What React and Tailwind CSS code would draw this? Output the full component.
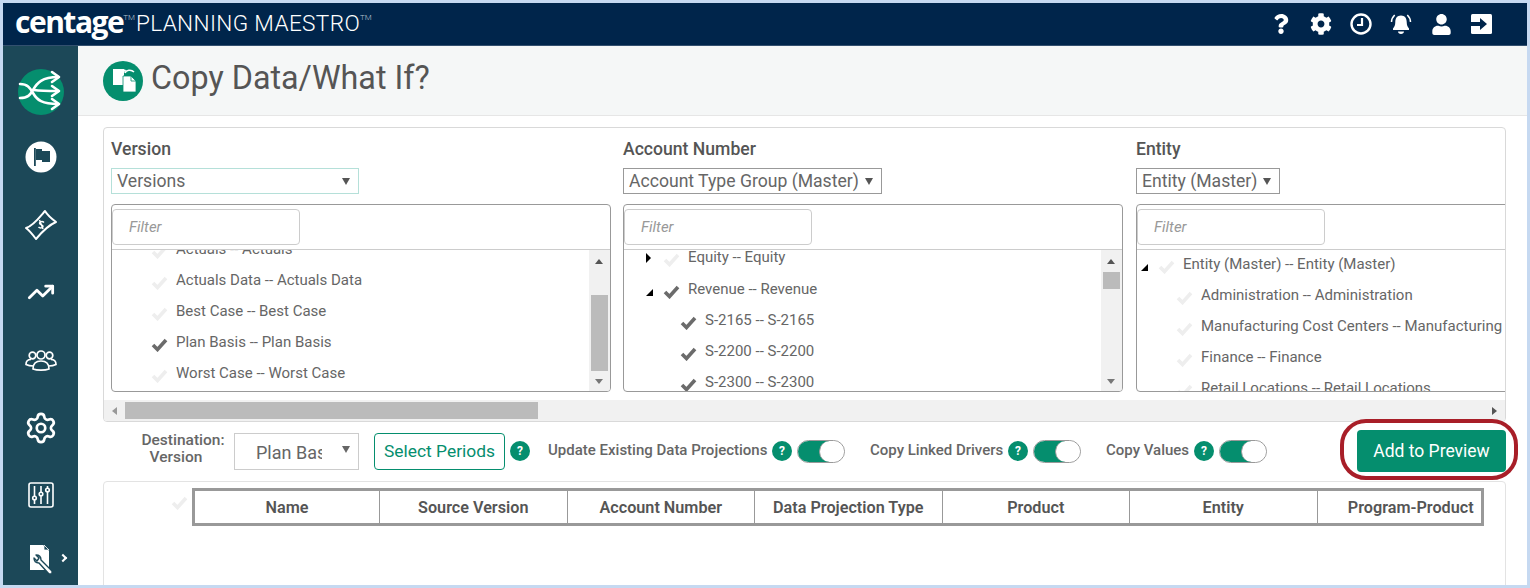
import { FaCog, FaQuestion, FaUser } from 'react-icons/fa'
import { Settings, TrendingUp } from 'lucide-react'

const columns = [
  {
    title: 'Version',
    select: 'Versions',
    widthClass: 'w-[512px]',
    selectClass: 'w-[248px] border-[#b5e0d9]',
    scrollClass: 'h-[76px] mt-[31px]',
    listOffset: '-mt-[16px]',
    rows: [
      { label: 'Actuals -- Actuals', pad: 'pl-[22px]' },
      { label: 'Actuals Data -- Actuals Data', pad: 'pl-[22px]' },
      { label: 'Best Case -- Best Case', pad: 'pl-[22px]' },
      { label: 'Plan Basis -- Plan Basis', pad: 'pl-[22px]', checked: true },
      { label: 'Worst Case -- Worst Case', pad: 'pl-[22px]' },
    ],
  },
  {
    title: 'Account Number',
    select: 'Account Type Group (Master)',
    widthClass: 'w-[513px]',
    selectClass: 'w-[259px] border-[#999999]',
    scrollClass: 'h-[17px] mt-[8px]',
    listOffset: '-mt-[9px]',
    rows: [
      { label: 'Equity -- Equity', pad: 'pl-[22px]', arrow: 'right', tall: true },
      { label: 'Revenue -- Revenue', pad: 'pl-[22px]', arrow: 'down', checked: true },
      { label: 'S-2165 -- S-2165', pad: 'pl-[39px]', checked: true },
      { label: 'S-2200 -- S-2200', pad: 'pl-[39px]', checked: true },
      { label: 'S-2300 -- S-2300', pad: 'pl-[39px]', checked: true },
    ],
  },
  {
    title: 'Entity',
    select: 'Entity (Master)',
    widthClass: 'w-[513px]',
    selectClass: 'w-[144px] border-[#999999]',
    listOffset: '-mt-[1px]',
    rows: [
      { label: 'Entity (Master) -- Entity (Master)', pad: 'pl-[4px]', arrow: 'down' },
      { label: 'Administration -- Administration', pad: 'pl-[22px]' },
      { label: 'Manufacturing Cost Centers -- Manufacturing Cost Centers', pad: 'pl-[22px]' },
      { label: 'Finance -- Finance', pad: 'pl-[22px]' },
      { label: 'Retail Locations -- Retail Locations', pad: 'pl-[22px]' },
    ],
  },
]

const tableHeaders = ['Name', 'Source Version', 'Account Number', 'Data Projection Type', 'Product', 'Entity', 'Program-Product']

function LogoMark() {
  return (
    <svg width="46" height="46" viewBox="0 0 46 46" fill="none">
      <circle cx="23" cy="23" r="23" fill="#058e6e" />
      <g stroke="#fff" strokeWidth="2.6" strokeLinecap="round" strokeLinejoin="round">
        <path d="M2 29c8 0 10-3 13-8 4-7 9-13 25-13" />
        <path d="M2 15c8 0 10 4 13 9 4 7 9 11 25 11" />
        <path d="M16 21c7 1 13 1 24 1" />
        <path d="M34 3l7 5-7 5M34 17l7 5-7 5M34 30l7 5-7 5" />
      </g>
    </svg>
  )
}

function CopyMark() {
  return (
    <svg width="40" height="40" viewBox="0 0 40 40">
      <circle cx="20" cy="20" r="20" fill="#058e6e" />
      <path d="M10 8h11v16H10z" fill="#fff" />
      <path d="M22 12c1-3 6-4 9-1" fill="none" stroke="#fff" strokeWidth="1.6" />
      <path d="M20 8l3 1-1 3z" fill="#fff" />
      <path d="M20 15h8l5 5v11H20z" fill="#fff" stroke="#058e6e" strokeWidth=".8" />
      <path d="M28 15v5h5" fill="none" stroke="#058e6e" strokeWidth=".8" />
    </svg>
  )
}

function ClockIcon() {
  return (
    <svg width="22" height="22" viewBox="0 0 22 22" fill="none" stroke="#fff">
      <circle cx="11" cy="11" r="9.5" strokeWidth="2.4" />
      <path d="M12 5v7H7" strokeWidth="2.2" />
    </svg>
  )
}

function BellIcon() {
  return (
    <svg width="22" height="22" viewBox="0 0 22 22">
      <path d="M11 2.500c3.800 0 5.700 2.800 5.700 6.500 0 3.500 1 5 2.300 6.500v1.500H3v-1.500C4.300 14 5.300 12.500 5.300 9c0-3.700 1.900-6.500 5.700-6.500zM8 18.500h6c0 1.500-1.300 2.500-3 2.500s-3-1-3-2.500z" fill="#fff" />
      <path d="M1.500 9c0-2.800 1.200-5 3.200-7M20.500 9c0-2.800-1.200-5-3.200-7" fill="none" stroke="#fff" strokeWidth="1.500" />
    </svg>
  )
}

function ExitIcon() {
  return (
    <svg width="21" height="20" viewBox="0 0 21 20">
      <rect width="21" height="20" rx="1.500" fill="#fff" />
      <path d="M0 8h9V4l7 6-7 6v-4H0z" fill="#00254b" />
    </svg>
  )
}

function FlagIcon() {
  return (
    <svg width="32" height="32" viewBox="0 0 32 32">
      <circle cx="16" cy="16" r="15.500" fill="#fff" />
      <path d="M9 7h1.800v18H9z" fill="#1c4858" />
      <path d="M11 8h6v2h8v11h-8v-2h-6z" fill="#1c4858" />
    </svg>
  )
}

function MoneyIcon() {
  return (
    <svg width="32" height="32" viewBox="0 0 32 32" fill="none" stroke="#fff" strokeWidth="2" strokeLinejoin="round">
      <path d="M1 19C8 17 14 9 20 2c3 5 7 8 11 11-7 3-15 11-20 17-3-4-6-8-10-11z" />
      <path d="M19 13.500c-1.500-1.500-4-1-4.500.5-.5 2 4 1.500 3.500 3.500-.5 1.500-3 2-4.500.5M14.500 11l3.500 9" strokeWidth="1.500" />
    </svg>
  )
}

function PeopleIcon() {
  return (
    <svg width="32" height="22" viewBox="0 0 32 22" fill="none" stroke="#fff" strokeWidth="1.700">
      <circle cx="16" cy="6" r="4" />
      <circle cx="7.500" cy="6.500" r="3.300" />
      <circle cx="24.500" cy="6.500" r="3.300" />
      <path d="M8 20c0-6 3-8 8-8s8 2 8 8c-4 1.500-12 1.500-16 0z" />
      <path d="M8.500 17C5 17 3 16.500 1 15.500c0-3.500 2-5 5-5M23.500 17c3.500 0 5.500-.5 7.500-1.500 0-3.500-2-5-5-5" />
    </svg>
  )
}

function SlidersIcon() {
  return (
    <svg width="26" height="26" viewBox="0 0 26 26" fill="none" stroke="#fff" strokeWidth="1.600">
      <rect x="1" y="1" width="24" height="24" rx="2" />
      <path d="M6.500 4v10M6.500 18v4M13 4v6M13 14v8M19.500 4v2M19.500 10v12" />
      <circle cx="6.500" cy="16" r="1.800" />
      <circle cx="13" cy="12" r="1.800" />
      <circle cx="19.500" cy="8" r="1.800" />
    </svg>
  )
}

function DocWrenchIcon() {
  return (
    <svg width="24" height="31" viewBox="0 0 24 31">
      <path d="M1 1h13l6 6v19H1z" fill="#fff" />
      <path d="M15 1l5 5h-5z" fill="#1c4858" stroke="#fff" strokeWidth=".8" />
      <path d="M5 14c0 3 2 5 5 5l10 11h3v-3L12 16c0-3-2-5-5-5l3 3-2 3z" fill="#fff" stroke="#1c4858" strokeWidth="1.400" strokeLinejoin="round" />
    </svg>
  )
}

function CheckMark({ checked }) {
  return (
    <svg className="mr-[8px] mt-[4px] shrink-0" width="17" height="15" viewBox="0 0 17 15" fill="none">
      <path d="M2 8l4.500 4.500L15 3" stroke={checked ? '#6b6b6b' : '#eeeeee'} strokeWidth="3.600" />
    </svg>
  )
}

function Caret({ className }) {
  return <span className={`border-x-[4px] border-t-[7px] border-x-transparent ${className}`} />
}

function HelpDot() {
  return (
    <span className="flex h-[20px] w-[20px] shrink-0 items-center justify-center rounded-full bg-[#058e6e] text-[12px] font-bold text-white">?</span>
  )
}

function Toggle() {
  return (
    <span className="relative block h-[23px] w-[48px] shrink-0 overflow-hidden rounded-full border border-[#999999] bg-white">
      <span className="block h-full w-[32px] bg-[#058e6e]" />
      <span className="absolute right-0 top-0 h-full w-[25px] rounded-full border-l border-[#999999] bg-white" />
    </span>
  )
}

function TreeRow({ row }) {
  return (
    <div className={`flex items-center whitespace-nowrap ${row.tall ? 'h-[33px]' : 'h-[31px]'} ${row.pad}`}>
      <span className="flex w-[17px] shrink-0 items-center">
        {row.arrow === 'right' && <span className="border-y-[5px] border-l-[5px] border-y-transparent border-l-black" />}
        {row.arrow === 'down' && <span className="mt-[5px] border-b-[7px] border-l-[7px] border-b-black border-l-transparent" />}
      </span>
      <CheckMark checked={row.checked} />
      <span>{row.label}</span>
    </div>
  )
}

function SelectorColumn({ column }) {
  return (
    <div className={`shrink-0 pt-[9px] ${column.widthClass}`}>
      <h3 className="h-[24px] text-[17.600px] font-medium leading-[24px] text-[#555555]">{column.title}</h3>
      <div className={`mt-[7px] flex h-[26px] items-center justify-between border pl-[5px] pr-[8px] text-[17.600px] text-[#666666] ${column.selectClass}`}>
        <span className="whitespace-nowrap">{column.select}</span>
        <Caret className="border-t-[#555555]" />
      </div>
      <div className="mt-[10px] h-[188px] w-[500px] overflow-hidden rounded-[4px] border border-[#999999]">
        <div className="h-[45px] border-b border-[#cccccc] pt-[4px]">
          <div className="flex h-[36px] w-[188px] items-center rounded-[4px] border border-[#cccccc] pl-[16px] text-[15px] italic text-[#999999]">Filter</div>
        </div>
        <div className="flex h-[141px]">
          <div className="min-w-0 flex-1 overflow-hidden text-[15px] text-[#666666]">
            <div className={column.listOffset}>
              {column.rows.map(row => <TreeRow key={row.label} row={row} />)}
            </div>
          </div>
          {column.scrollClass && (
            <div className="flex w-[21px] shrink-0 flex-col items-center bg-[#f1f1f1] pr-[1px]">
              <span className="mt-[9px] border-x-[4px] border-b-[5px] border-x-transparent border-b-[#555555]" />
              <div className={`w-[17px] bg-[#bbbbbb] ${column.scrollClass}`} />
              <span className="mb-[7px] mt-auto border-x-[4px] border-t-[5px] border-x-transparent border-t-[#777777]" />
            </div>
          )}
        </div>
      </div>
    </div>
  )
}

export default function App() {
  return (
    <div className="flex h-[588px] w-[1530px] flex-col overflow-hidden border-[3px] border-[#c6d9f1] bg-white font-['Roboto',sans-serif]">
      {/* Top bar */}
      <header className="flex h-[43px] shrink-0 items-center border-b border-[#33506f] bg-[#00254b] pl-[12px] pr-[26px] text-white">
        <span className="mb-[4px] font-['Open_Sans',sans-serif] text-[30px] font-bold leading-none tracking-[-1.500px]">centage</span>
        <span className="mb-[12px] text-[8px] font-light text-[#b8c4d0]">TM</span>
        <span className="ml-[1px] mt-[1px] text-[22.600px] font-light leading-none tracking-[0.350px]">PLANNING MAESTRO</span>
        <span className="mb-[12px] text-[8px] font-light text-[#b8c4d0]">TM</span>
        <div className="ml-auto flex items-center">
          <span className="flex w-[40px] justify-center"><FaQuestion className="text-[20px]" /></span>
          <span className="flex w-[40px] justify-center"><FaCog className="text-[22px]" /></span>
          <span className="flex w-[40px] justify-center"><ClockIcon /></span>
          <span className="flex w-[40px] justify-center"><BellIcon /></span>
          <span className="flex w-[40px] justify-center"><FaUser className="text-[21px]" /></span>
          <span className="flex w-[40px] justify-center"><ExitIcon /></span>
        </div>
      </header>

      <div className="flex min-h-0 flex-1">
        {/* Side nav */}
        <aside className="relative flex w-[75px] shrink-0 flex-col items-center bg-[#1c4858] pt-[23px]">
          <LogoMark />
          <div className="mt-[26px]"><FlagIcon /></div>
          <div className="mt-[36px]"><MoneyIcon /></div>
          <TrendingUp className="mt-[37px] text-white" size={28} strokeWidth={2.4} />
          <div className="mt-[43px]"><PeopleIcon /></div>
          <Settings className="mt-[40px] text-white" size={34} strokeWidth={1.9} />
          <div className="mt-[37px]"><SlidersIcon /></div>
          <div className="mt-[36px]"><DocWrenchIcon /></div>
          <span className="absolute bottom-[24px] right-[12px] h-[6px] w-[6px] rotate-45 border-r-2 border-t-2 border-white" />
        </aside>

        <main className="relative flex min-w-0 flex-1 flex-col">
          <div className="flex h-[70px] shrink-0 items-center gap-[8px] border-b border-[#e6e6e6] bg-[#f5f7f7] pl-[25px]">
            <CopyMark />
            <h1 className="mb-[4px] text-[32.300px] leading-none text-[#555555]">Copy Data/What If?</h1>
          </div>

          <div className="pl-[25px] pr-[21px] pt-[11px]">
            {/* Selector panel */}
            <section className="overflow-hidden rounded-[4px] border border-[#d9d9d9]">
              <div className="flex pl-[7px]">
                {columns.map(column => <SelectorColumn key={column.title} column={column} />)}
              </div>
              <div className="mt-[8px] flex h-[21px] items-center bg-[#f1f1f1]">
                <span className="ml-[8px] border-y-[4px] border-r-[5px] border-y-transparent border-r-[#999999]" />
                <div className="ml-[8px] h-[17px] w-[413px] bg-[#bbbbbb]" />
                <span className="ml-auto mr-[8px] border-y-[4px] border-l-[5px] border-y-transparent border-l-[#555555]" />
              </div>
            </section>

            {/* Destination options */}
            <div className="mt-[8px] flex h-[42px] items-center pl-[38px] text-[#666666]">
              <div className="mb-[5px] w-[84px] shrink-0 whitespace-nowrap text-center text-[15.500px] font-medium leading-[17px]">
                <div>Destination:</div>
                <div className="pr-[14px]">Version</div>
              </div>
              <div className="ml-[9px] flex h-[37px] w-[125px] shrink-0 items-center border border-[#cccccc] pl-[21px] pr-[8px] text-[18px]">
                <span className="mt-[3px] w-[66px] overflow-hidden whitespace-nowrap">Plan Basis</span>
                <Caret className="mb-[4px] ml-auto border-t-[#666666]" />
              </div>
              <button className="ml-[15px] h-[37px] w-[131px] shrink-0 rounded-[4px] border border-[#058e6e] text-[17.400px] text-[#058e6e]">Select Periods</button>
              <div className="ml-[5px]"><HelpDot /></div>
              <span className="mb-[2px] ml-[18px] w-[219px] shrink-0 whitespace-nowrap text-[15px] font-medium">Update Existing Data Projections</span>
              <div className="ml-[5px]"><HelpDot /></div>
              <div className="ml-[5px]"><Toggle /></div>
              <span className="mb-[2px] ml-[25px] w-[133px] shrink-0 whitespace-nowrap text-[15px] font-medium">Copy Linked Drivers</span>
              <div className="ml-[5px]"><HelpDot /></div>
              <div className="ml-[5px]"><Toggle /></div>
              <span className="mb-[2px] ml-[25px] w-[83px] shrink-0 whitespace-nowrap text-[15px] font-medium">Copy Values</span>
              <div className="ml-[5px]"><HelpDot /></div>
              <div className="ml-[5px]"><Toggle /></div>
              <button className="ml-auto h-[42px] w-[149px] shrink-0 rounded-[4px] bg-[#058e6e] text-[17.500px] text-white">Add to Preview</button>
            </div>

            {/* Preview table */}
            <section className="relative mt-[9px] h-[110px] rounded-t-[4px] border border-[#e3e3e3] pl-[88px] pt-[6px]">
              <svg className="absolute left-[67px] top-[13px]" width="17" height="15" viewBox="0 0 17 15" fill="none">
                <path d="M2 8l4.500 4.500L15 3" stroke="#eeeeee" strokeWidth="3.600" />
              </svg>
              <div className="flex h-[38px] w-[1292px] overflow-hidden border-[3px] border-[#999999] text-[16.200px] font-semibold text-[#555555]">
                {tableHeaders.map(header => (
                  <div key={header} className="flex h-full w-[187.500px] shrink-0 items-center justify-center whitespace-nowrap border-r border-[#999999] pt-[2px] first:w-[185px]">{header}</div>
                ))}
              </div>
            </section>
          </div>

          {/* Highlight ring drawn over the page */}
          <div className="absolute left-[1262px] top-[373px] h-[61px] w-[178px] rounded-[26px] border-[4px] border-[#a81e28]" />
        </main>
      </div>
    </div>
  )
}
